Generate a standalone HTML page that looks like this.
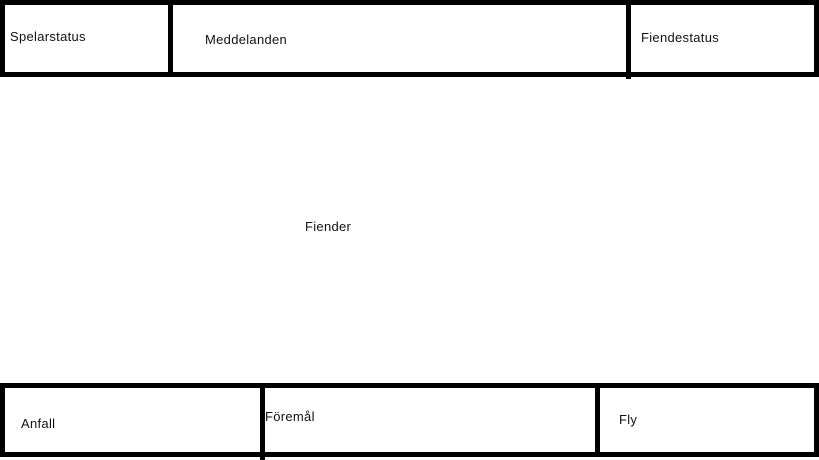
<!DOCTYPE html>
<html><head><meta charset="utf-8"><style>
html,body{margin:0;padding:0;background:#fff;width:819px;height:460px;overflow:hidden;position:relative}
.b{position:absolute;background:#000}
.t{position:absolute;font-family:"Liberation Sans",sans-serif;font-size:13px;line-height:13px;color:#111;white-space:nowrap;letter-spacing:0.3px}
</style></head><body>
<div class="b" style="left:0;top:0;width:819px;height:5px"></div>
<div class="b" style="left:0;top:72px;width:819px;height:5px"></div>
<div class="b" style="left:0;top:0;width:5px;height:77px"></div>
<div class="b" style="left:168px;top:0;width:5px;height:77px"></div>
<div class="b" style="left:626px;top:0;width:5px;height:79px"></div>
<div class="b" style="left:814px;top:0;width:5px;height:77px"></div>

<div class="b" style="left:0;top:383px;width:819px;height:5px"></div>
<div class="b" style="left:0;top:452px;width:819px;height:5px"></div>
<div class="b" style="left:0;top:383px;width:5px;height:74px"></div>
<div class="b" style="left:260px;top:383px;width:5px;height:77px"></div>
<div class="b" style="left:595px;top:383px;width:5px;height:74px"></div>
<div class="b" style="left:814px;top:383px;width:5px;height:74px"></div>

<div class="t" style="left:10px;top:30px">Spelarstatus</div>
<div class="t" style="left:205px;top:33px">Meddelanden</div>
<div class="t" style="left:641px;top:31px">Fiendestatus</div>
<div class="t" style="left:305px;top:220px">Fiender</div>
<div class="t" style="left:21px;top:417px">Anfall</div>
<div class="t" style="left:265px;top:410px">Föremål</div>
<div class="t" style="left:619px;top:413px">Fly</div>
</body></html>
